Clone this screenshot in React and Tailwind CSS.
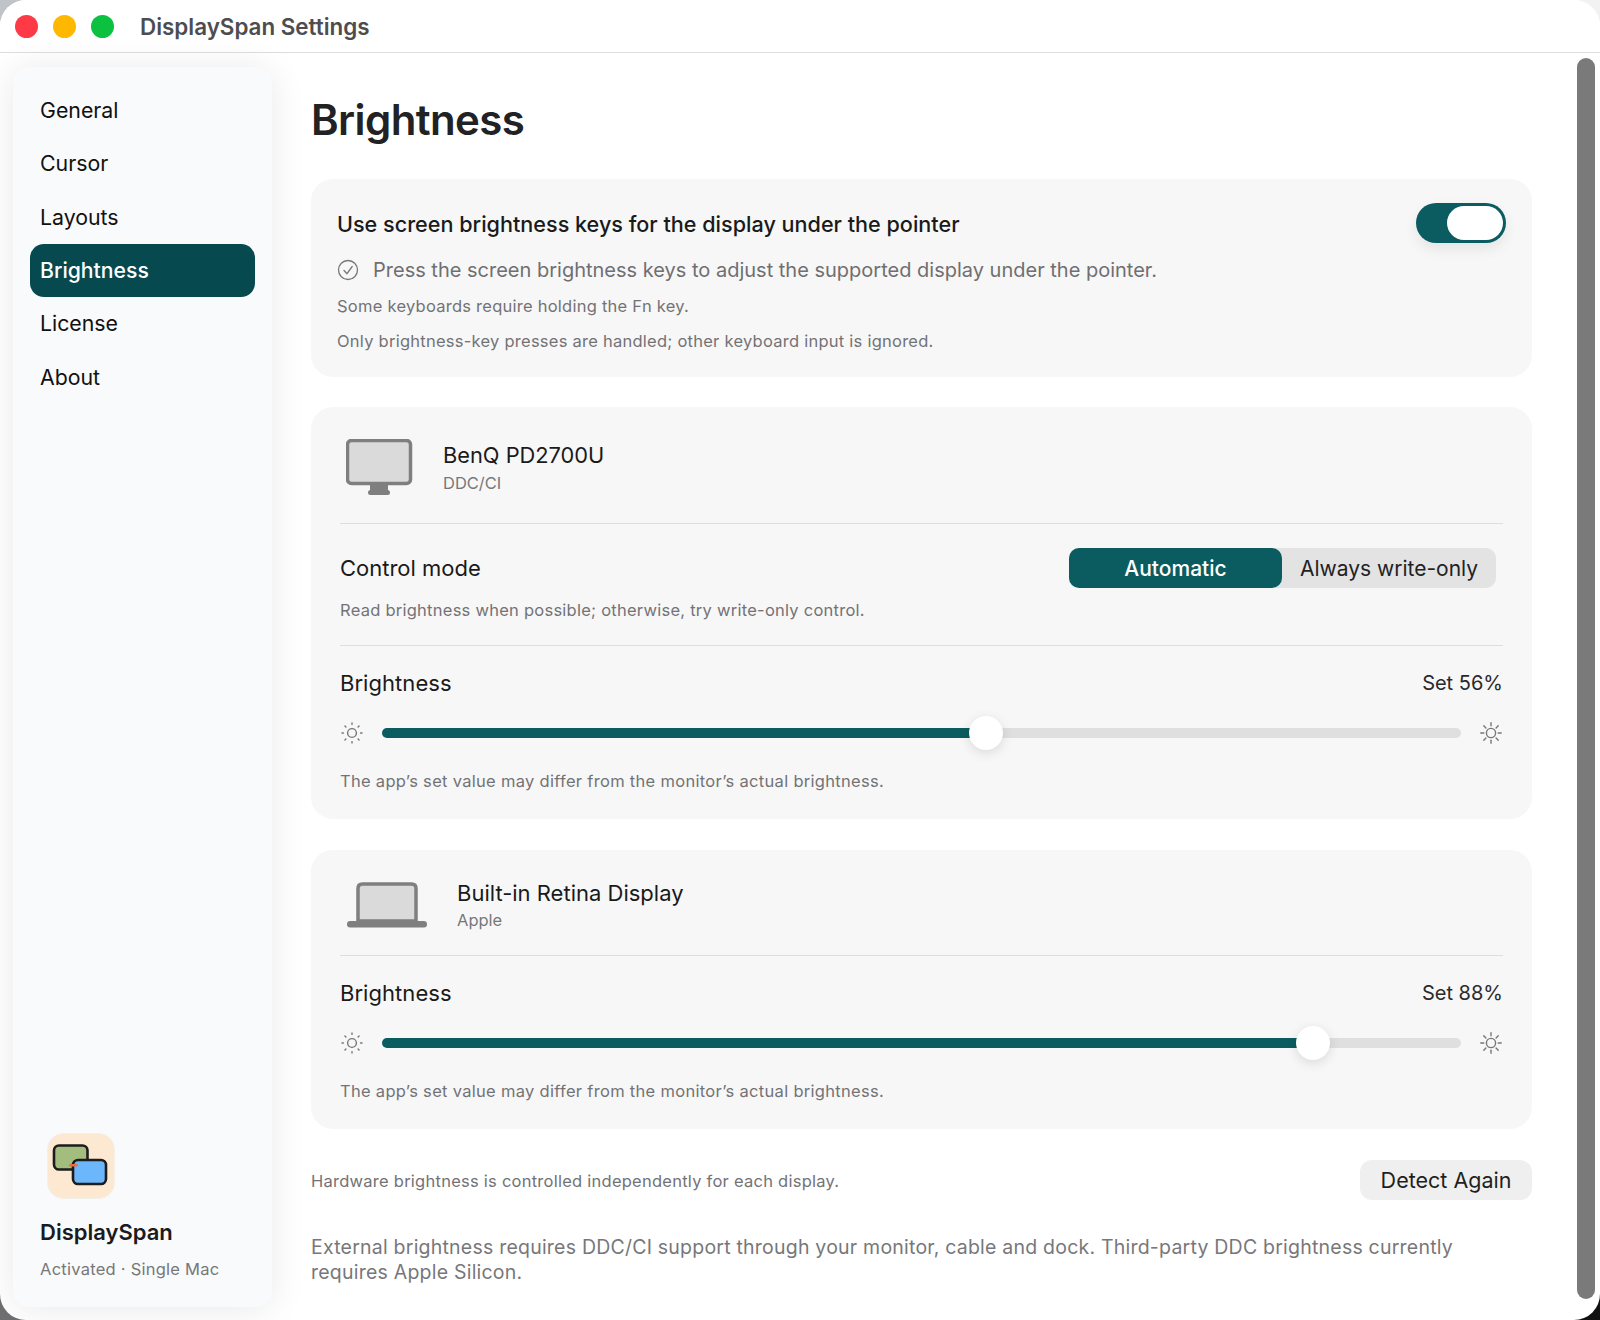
import React from "react";

const navItems = ["General", "Cursor", "Layouts", "Brightness", "License", "About"];

function SunIcon({ big }) {
  const rays = [0, 45, 90, 135, 180, 225, 270, 315];
  return (
    <svg width="24" height="24" viewBox="0 0 24 24" className="shrink-0" fill="none" stroke="#77777a">
      <circle cx="12" cy="12" r={big ? 4.6 : 4.4} strokeWidth="1.4" />
      {rays.map((r) => (
        <line
          key={r}
          x1="12"
          y1={big ? 1.8 : 2}
          x2="12"
          y2={big ? 4.8 : 3.4}
          strokeWidth="1.4"
          strokeLinecap="round"
          transform={`rotate(${r} 12 12)`}
        />
      ))}
    </svg>
  );
}

function MonitorIcon() {
  return (
    <svg width="67" height="56" viewBox="0 0 67 56" className="shrink-0 -mt-[2px]">
      <rect x="1.5" y="1.5" width="63" height="43" rx="4" fill="#dadada" stroke="#7f7f7f" strokeWidth="3.5" />
      <rect x="24" y="46" width="18" height="7" fill="#7f7f7f" />
      <rect x="22" y="51" width="22" height="5" rx="2.5" fill="#7f7f7f" />
    </svg>
  );
}

function LaptopIcon() {
  return (
    <svg width="80" height="46" viewBox="0 0 80 46" className="shrink-0 mt-[4px]">
      <path d="M11 39V6.5C11 3.5 12.5 2 15.5 2H64.5C67.5 2 69 3.5 69 6.5V39Z" fill="#dadada" stroke="#7f7f7f" strokeWidth="3.5" />
      <rect x="0" y="39" width="80" height="6.5" rx="3.2" fill="#7f7f7f" />
    </svg>
  );
}

function AppIcon() {
  return (
    <svg width="68" height="66" viewBox="0 0 68 66">
      <rect x="0.5" y="0.5" width="67" height="65" rx="16" fill="#fde8d2" stroke="#f3efe9" />
      <rect x="7" y="12.5" width="33.5" height="24" rx="5" fill="#a3bd7f" stroke="#1d1d1d" strokeWidth="2.6" />
      <rect x="26" y="27" width="33" height="24" rx="5" fill="#6cb6fb" stroke="#1d1d1d" strokeWidth="2.6" />
      <rect x="22" y="31" width="9" height="2.6" rx="1.3" fill="#ee6c3c" />
    </svg>
  );
}

function Slider({ pos }) {
  return (
    <div className="mt-[19px] flex h-[34px] items-center gap-[18px]">
      <SunIcon />
      <div className="relative h-[10px] flex-1 rounded-full bg-[#dfdfdf]">
        <div className="h-full rounded-full bg-[#0b5c60]" style={{ width: `${pos}%` }} />
        <div
          className="absolute top-1/2 h-[34px] w-[34px] -translate-x-1/2 -translate-y-1/2 rounded-full bg-white shadow-[0_3px_12px_rgba(0,0,0,0.12)]"
          style={{ left: `${pos}%` }}
        />
      </div>
      <SunIcon big />
    </div>
  );
}

function BrightnessBlock({ value, pos }) {
  return (
    <div className="mt-[23px]">
      <div className="flex h-[28px] items-center justify-between">
        <span className="text-[22px] tracking-[0.05px] text-[#1a1a1a]">Brightness</span>
        <span className="text-[20px] text-[#2a2a2a]">Set {value}%</span>
      </div>
      <Slider pos={pos} />
      <p className="mt-[19.5px] h-[22px] text-[16.5px] leading-[22px] tracking-[0.3px] text-[#737376]">
        The app’s set value may differ from the monitor’s actual brightness.
      </p>
    </div>
  );
}

export default function App() {
  return (
    <div className="h-[1320px] w-[1600px] overflow-hidden bg-[conic-gradient(#f2f2f2_0_25%,#111111_25%_50%,#6e6e70_50%_75%,#c0c3c8_75%_100%)] font-['Inter',sans-serif]">
      <div className="relative flex h-full flex-col overflow-hidden rounded-[26px] bg-white">
        {/* title bar */}
        <div className="flex h-[53px] shrink-0 items-center border-b border-[#dedede] bg-white pl-[15px]">
          <div className="flex gap-[15px]">
            <span className="h-[23px] w-[23px] rounded-full bg-[#fd3a46]" />
            <span className="h-[23px] w-[23px] rounded-full bg-[#ffb700]" />
            <span className="h-[23px] w-[23px] rounded-full bg-[#0bc13f]" />
          </div>
          <span className="ml-[26px] pt-[2px] text-[22.4px] font-semibold text-[#4d4d50]">DisplaySpan Settings</span>
        </div>

        <div className="flex min-h-0 flex-1">
          {/* sidebar */}
          <div className="shrink-0 pl-[13px] pt-[14px] pb-[13px]">
            <aside className="flex h-full w-[259px] flex-col rounded-[16px] bg-[#f9fafb] pl-[17px] pr-[17px] pt-[17px] pb-[27px] shadow-[0_2px_36px_rgba(0,0,0,0.09)]">
              <nav className="flex flex-col">
                {navItems.map((item) => (
                  <div
                    key={item}
                    className={
                      item === "Brightness"
                        ? "flex h-[53.3px] w-[225px] items-center rounded-[14px] bg-[#064a50] pl-[10px] text-[21.2px] font-medium text-white"
                        : "flex h-[53.3px] w-[225px] items-center pl-[10px] pt-[1px] text-[21.3px] text-[#111111]"
                    }
                  >
                    {item}
                  </div>
                ))}
              </nav>
              <div className="mt-auto pl-[10px]">
                <div className="ml-[7px]">
                  <AppIcon />
                </div>
                <div className="mt-[19px] text-[22px] font-semibold leading-[28px] text-[#1b1b1d]">DisplaySpan</div>
                <div className="mt-[12px] text-[16.5px] leading-[22px] tracking-[0.25px] text-[#77777a]">Activated · Single Mac</div>
              </div>
            </aside>
          </div>

          {/* main */}
          <main className="min-w-0 flex-1 pl-[39px] pr-[68px]">
            <h1 className="mt-[41px] h-[52px] text-[42px] font-semibold leading-[52px] tracking-[-0.6px] text-[#222224]">Brightness</h1>

            <section className="mt-[33px] rounded-[22px] bg-[#f7f7f7] pl-[26px] pr-[26px] pt-[24px] pb-[25px]">
              <div className="flex h-[40px] items-center justify-between">
                <span className="pt-[2px] text-[21.6px] font-medium text-[#1a1a1a]">Use screen brightness keys for the display under the pointer</span>
                <div className="flex h-[40px] w-[90px] items-center justify-end rounded-full bg-[#0b5c60] pr-[3px] shadow-[0_6px_14px_rgba(0,0,0,0.08)]">
                  <div className="h-[34px] w-[56px] rounded-full bg-white" />
                </div>
              </div>
              <div className="mt-[12px] flex h-[30px] items-center">
                <svg width="22" height="22" viewBox="0 0 22 22" fill="none" stroke="#77777a" strokeWidth="1.3" className="shrink-0">
                  <circle cx="11" cy="11" r="9.5" />
                  <path d="M7 11.5l3 3.2 5.2-7.2" strokeLinecap="round" strokeLinejoin="round" />
                </svg>
                <span className="ml-[14px] text-[20px] text-[#6f6f72]">Press the screen brightness keys to adjust the supported display under the pointer.</span>
              </div>
              <p className="mt-[10px] h-[22px] text-[16.5px] leading-[22px] tracking-[0.25px] text-[#737376]">Some keyboards require holding the Fn key.</p>
              <p className="mt-[13px] h-[22px] text-[16.5px] leading-[22px] tracking-[0.25px] text-[#737376]">Only brightness-key presses are handled; other keyboard input is ignored.</p>
            </section>

            <section className="mt-[30px] rounded-[22px] bg-[#f7f7f7] pl-[29px] pr-[29px] pt-[34px] pb-[27.5px]">
              <div className="mb-[28px] flex items-start gap-[30px] pl-[6px]">
                <MonitorIcon />
                <div>
                  <div className="text-[21.8px] leading-[28px] text-[#1a1a1a]">BenQ PD2700U</div>
                  <div className="mt-[3px] text-[16.5px] leading-[22px] text-[#77777a]">DDC/CI</div>
                </div>
              </div>
              <div className="h-px bg-[#dedede]" />
              <div className="mt-[24px] flex h-[40px] items-center justify-between pr-[7px]">
                <span className="text-[22px] text-[#1a1a1a]">Control mode</span>
                <div className="flex h-[40px] w-[427px] rounded-[10px] bg-[#e3e3e3] pt-0">
                  <div className="flex w-[213px] items-center justify-center rounded-[10px] bg-[#0b5c60] pt-[1px] text-[21px] font-medium text-white">Automatic</div>
                  <div className="flex flex-1 items-center justify-center pt-[1px] text-[21px] text-[#222224]">Always write-only</div>
                </div>
              </div>
              <p className="mt-[11px] h-[22px] text-[16.5px] leading-[22px] tracking-[0.25px] text-[#737376]">Read brightness when possible; otherwise, try write-only control.</p>
              <div className="mt-[24px] h-px bg-[#dedede]" />
              <BrightnessBlock value={56} pos={56} />
            </section>

            <section className="mt-[31px] rounded-[22px] bg-[#f7f7f7] pl-[29px] pr-[29px] pt-[28px] pb-[27.5px]">
              <div className="mb-[24px] flex items-start gap-[30px] pl-[7px]">
                <LaptopIcon />
                <div>
                  <div className="mt-[1px] text-[22px] leading-[28px] text-[#1a1a1a]">Built-in Retina Display</div>
                  <div className="mt-[2px] text-[16.5px] leading-[22px] text-[#77777a]">Apple</div>
                </div>
              </div>
              <div className="h-px bg-[#dedede]" />
              <BrightnessBlock value={88} pos={86.3} />
            </section>

            <div className="mt-[31px] flex h-[40px] items-center justify-between">
              <span className="pt-[2px] text-[16.5px] tracking-[0.25px] text-[#737376]">Hardware brightness is controlled independently for each display.</span>
              <button className="flex h-[40px] w-[172px] items-center justify-center rounded-[12px] bg-[#efefef] text-[21.5px] text-[#1f1f21]">Detect Again</button>
            </div>
            <p className="mt-[35px] text-[19.5px] leading-[25px] tracking-[0.22px] text-[#77777a]">
              External brightness requires DDC/CI support through your monitor, cable and dock. Third-party DDC brightness currently requires Apple Silicon.
            </p>
          </main>
        </div>

        {/* overlay scrollbar */}
        <div className="absolute right-[5px] top-[58px] h-[1241px] w-[18px] rounded-full bg-[#7a7a7a]" />
      </div>
    </div>
  );
}
